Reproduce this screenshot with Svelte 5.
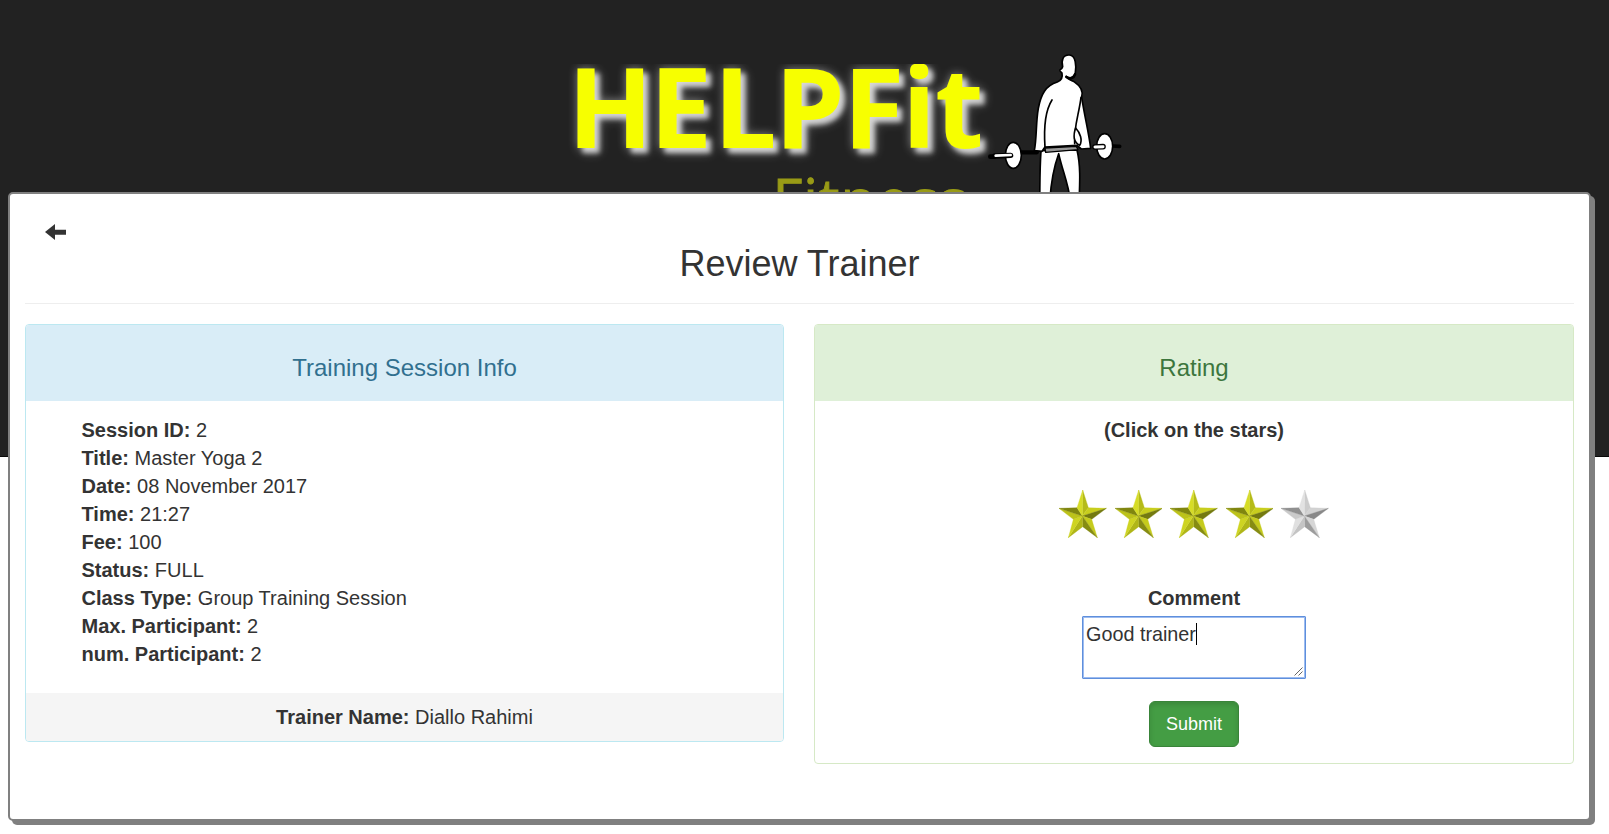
<script>
  const details = [
    ['Session ID:', '2'],
    ['Title:', 'Master Yoga 2'],
    ['Date:', '08 November 2017'],
    ['Time:', '21:27'],
    ['Fee:', '100'],
    ['Status:', 'FULL'],
    ['Class Type:', 'Group Training Session'],
    ['Max. Participant:', '2'],
    ['num. Participant:', '2']
  ];
  const gold = ['#b5bb18', '#c8ce1e', '#747a10', '#c5cb1c', '#868c12', '#b0b618', '#ced422', '#bcc21a', '#80860f', '#d6dc26'];
  const silver = ['#cccccc', '#d2d2d2', '#888888', '#d6d6d6', '#9c9c9c', '#c4c4c4', '#e0e0e0', '#cacaca', '#909090', '#e2e2e2'];
  const ring = [[71, 0], [88, 53], [142, 55], [98, 88], [115, 143], [71, 110], [28, 143], [43, 88], [0, 55], [54, 53]];
  const facets = ring.map((p, i) => {
    const q = ring[(i + 1) % ring.length];
    return `70,78 ${p.join(',')} ${q.join(',')}`;
  });
  let rating = $state(4);
</script>

<div class="page">
  <header class="hero">
    <svg class="logo" viewBox="555 64 590 140" width="590" height="140" aria-label="HELPFit Fitness">
      <text class="brand" y="148" x="567.5 649.5 713.5 774.5 843 902 935">HELPFit</text>
      <text class="sub" x="772.5" y="221" textLength="194">Fitness</text>
    </svg>
    <svg class="lifter" viewBox="0 0 480 480" width="160" height="160" aria-hidden="true">
      <g stroke="#000" stroke-width="5" stroke-linejoin="round" stroke-linecap="round" fill="#fff">
        <path d="M58 350 L46 350" stroke-width="14" />
        <path d="M412 318 L434 319" stroke-width="11" />
        <path d="M135 337 L185 337" stroke-width="13" />
        <ellipse cx="115" cy="346" rx="24" ry="39" />
        <path d="M60 348 L107 346" stroke-width="16" />
        <path d="M62 347 L107 345" stroke="#fff" stroke-width="8" />
        <path d="M198 332 C194 390 195 430 194 490 L224 490 C227 435 235 385 251 341 C263 395 282 435 287 490 L312 490 C314 435 318 380 306 330 Z" />
        <path d="M263 80 C259 93 254 84 255 92 C256 97 261 96 261 100 C264 114 259 121 247 126 C212 137 198 162 190 205 C182 250 186 290 178 332 L201 334 L210 321 L306 316 L319 327 L347 325 C342 282 330 235 320 172 C326 154 319 140 297 125 C285 120 277 118 274 109 C286 118 299 111 301 98 C304 78 303 46 283 45 C264 44 258 61 263 80 Z" />
        <path d="M274 111 C286 119 297 114 300 103" fill="none" stroke-width="8" />
        <path d="M231 180 C208 216 207 278 210 322 M318 172 C313 218 295 264 299 311" fill="none" />
        <path d="M302 264 C294 286 296 307 314 316 C324 300 315 278 302 264 Z" />
        <path d="M210 324 L304 319 L309 329 L212 337 Z" fill="#999" stroke-width="4" />
        <ellipse cx="389" cy="319" rx="24" ry="38" />
        <path d="M360 321 L384 320" stroke-width="17" />
        <path d="M360 321 L384 320" stroke="#fff" stroke-width="9" />
      </g>
    </svg>
  </header>

  <main class="card">
    <button class="back" aria-label="Back">
      <svg viewBox="0 0 63 48" width="21" height="16"><path d="M0 24 L30 0 V17 H63 V32 H30 V48 Z" fill="#333" /></svg>
    </button>
    <h1>Review Trainer</h1>
    <div class="columns">
      <section class="panel info">
        <h2>Training Session Info</h2>
        <ul>
          {#each details as [label, value]}
            <li><b>{label}</b> {value}</li>
          {/each}
        </ul>
        <footer><b>Trainer Name:</b> Diallo Rahimi</footer>
      </section>
      <section class="panel rating">
        <h2>Rating</h2>
        <div class="form">
          <b>(Click on the stars)</b>
          <div class="stars">
            {#each [1, 2, 3, 4, 5] as n}
              <button class="star" aria-label={`${n} stars`} onclick={() => (rating = n)}>
                <svg viewBox="0 0 142 143" width="47.4" height="47.7">
                  {#each facets as points, i}
                    {@const color = (n <= rating ? gold : silver)[i]}
                    <polygon {points} fill={color} stroke={color} stroke-width="1" />
                  {/each}
                </svg>
              </button>
            {/each}
          </div>
          <b>Comment</b>
          <div class="comment" role="textbox" aria-label="Comment" tabindex="-1">
            <span>Good trainer</span><i class="caret"></i>
            <svg class="grip" viewBox="0 0 9 9" width="9" height="9"><path d="M.5 8.5 L8.5 .5 M4.5 8.5 L8.5 4.5" stroke="#555" stroke-width=".9" /></svg>
          </div>
          <button class="submit">Submit</button>
        </div>
      </section>
    </div>
  </main>
</div>

<style>
  :global(body) { margin: 0; background: #fff; }
  .page { height: 834px; overflow: hidden; font: 20px/28px "Liberation Sans", Arial, sans-serif; color: #333; }
  .page * { box-sizing: border-box; }
  button { font: inherit; border: 0; padding: 0; background: none; display: block; }
  svg { display: block; }
  .hero { height: 457px; background: #222; border-bottom: 1px solid #080808; position: relative; box-sizing: border-box; }
  .logo { position: absolute; left: 555px; top: 64px; overflow: hidden; }
  .lifter { position: absolute; left: 975px; top: 40px; }
  .brand { font: 700 112px "Open Sans", sans-serif; fill: #f7ff00; filter: drop-shadow(5px 5px 2.5px rgba(255, 255, 255, .7)) drop-shadow(0 0 5px rgba(255, 255, 255, .45)); }
  .sub { font: 400 58px "Open Sans", sans-serif; fill: #999b16; stroke: #999b16; stroke-width: 1px; }
  .card { position: relative; width: 1583px; height: 629px; margin: -265px 0 0 8px; padding: 30px 15px 0; background: #fff; border: 2px solid #808080; border-radius: 5px; box-shadow: 4px 4px 0 #808080; }
  .back { margin-left: 20px; height: 16px; }
  h1 { font-weight: 400; font-size: 36px; line-height: 40px; margin: 4px 0 0; height: 60px; border-bottom: 1px solid #eee; text-align: center; }
  .columns { display: grid; grid-template-columns: 759px 760px; gap: 30px; align-items: start; margin-top: 20px; }
  .panel { border: 1px solid #bce8f1; border-radius: 4px; overflow: hidden; }
  h2 { margin: 0; height: 76px; padding-top: 28px; font-weight: 400; font-size: 24px; line-height: 30px; text-align: center; }
  .info h2 { background: #d9edf7; color: #31708f; }
  .rating { border-color: #d6e9c6; height: 440px; }
  .rating h2 { background: #dff0d8; color: #3c763d; }
  ul { list-style: none; margin: 0; padding: 15px 15px 25px 55.5px; }
  footer { background: #f5f5f5; padding: 10px; text-align: center; height: 48px; }
  .form { display: flex; flex-direction: column; align-items: center; padding-top: 15px; }
  .stars { display: flex; gap: 8.2px; margin: 46px 0; height: 48px; }
  .comment { position: relative; display: flex; align-items: flex-start; width: 224px; height: 63px; margin-top: 4px; border: 1px solid #5f8fdc; outline: 1px solid #9dbcf0; outline-offset: -2px; border-radius: 1px; padding: 3px; }
  .comment span { font-size: 19.8px; }
  .caret { width: 1px; height: 22px; margin-top: 3px; background: #000; }
  .grip { position: absolute; right: 2px; bottom: 2px; }
  .submit { margin-top: 22px; width: 90px; height: 46px; border-radius: 6px; border: 1px solid #398439; background: #449d44; color: #fff; font-size: 18px; box-shadow: inset 0 3px 5px rgba(0, 0, 0, .125); }
</style>
